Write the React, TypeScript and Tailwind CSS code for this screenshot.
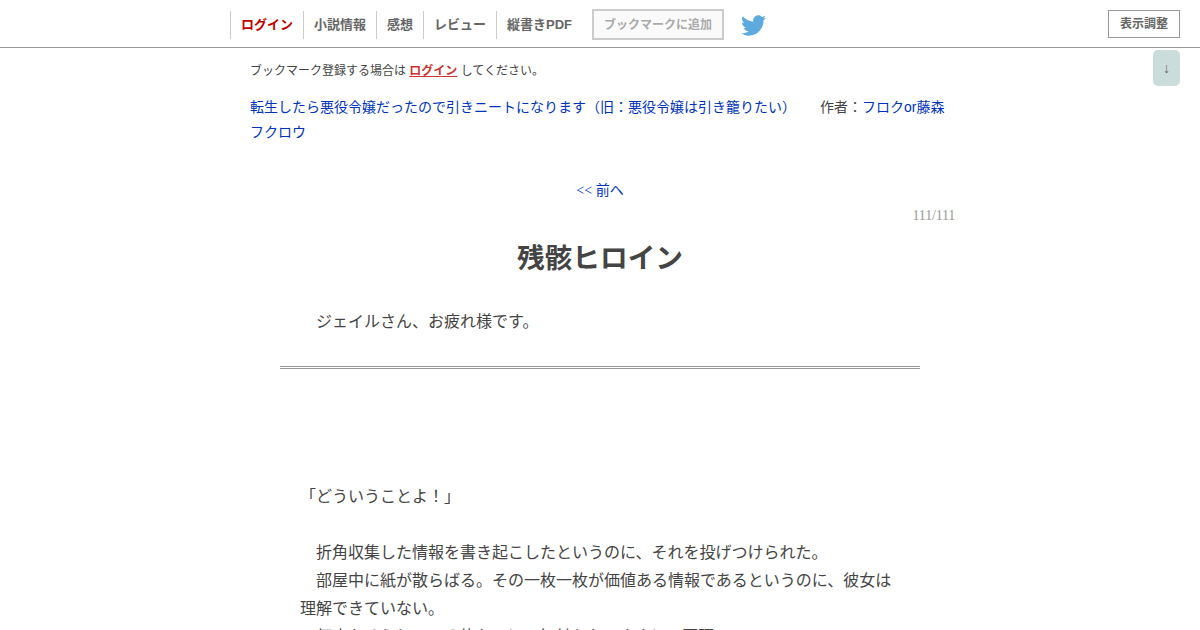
import { FaTwitter } from 'react-icons/fa';

const NAV_ITEMS = [
  { label: 'ログイン', className: 'text-[#c00000]' },
  { label: '小説情報', className: 'text-[#666]' },
  { label: '感想', className: 'text-[#666]' },
  { label: 'レビュー', className: 'text-[#666]' },
  { label: '縦書きPDF', className: 'text-[#666]' },
];

const BODY_LINES = [
  '「どういうことよ！」',
  '',
  '　折角収集した情報を書き起こしたというのに、それを投げつけられた。',
  '　部屋中に紙が散らばる。その一枚一枚が価値ある情報であるというのに、彼女は理解できていない。',
  '　何度もそうしている体なのに、気付かないままに、再理。',
];

const Header = () => (
  <header className="flex h-12 justify-between border-b border-[#999] pr-5 pl-[230px]">
    <nav className="flex items-start">
      <ul className="flex pt-[11px] text-[13px] leading-7 font-bold">
        {NAV_ITEMS.map(({ label, className }) => (
          <li key={label} className="h-7 border-l border-[#ccc] px-2.5">
            <a href="#" className={className}>
              {label}
            </a>
          </li>
        ))}
      </ul>
      <span className="mt-[9px] ml-2.5 h-[31px] border-2 border-[#ccc] bg-[#fafafa] px-2.5 text-xs leading-7 font-bold text-[#aaa]">
        ブックマークに追加
      </span>
      <a href="#" aria-label="Twitter" className="mt-[13px] ml-[17px]">
        <FaTwitter className="h-[25px] w-[25px] text-[#5ea9dd]" />
      </a>
    </nav>
    <button
      type="button"
      className="mt-2.5 h-7 w-[72px] border border-[#999] text-xs leading-6 font-bold text-[#666]"
    >
      表示調整
    </button>
  </header>
);

const App = () => (
  <div className="relative h-[630px] overflow-hidden bg-white font-['Liberation_Serif','Noto_Sans_CJK_JP',serif] text-[#444]">
    <div className="font-['Liberation_Sans','Noto_Sans_CJK_JP',sans-serif]">
      <Header />
    </div>
    <a
      href="#"
      className="absolute top-[50px] right-5 flex h-9 w-[27px] items-center justify-center rounded-[5px] bg-[#cadddb] pt-0.5 text-sm text-[#666]"
    >
      ↓
    </a>

    <main className="mx-auto w-[740px]">
      <div className="px-5 font-['Liberation_Sans','Noto_Sans_CJK_JP',sans-serif]">
        <p className="pt-3.5 text-xs leading-[18px]">
          ブックマーク登録する場合は{' '}
          <a href="#" className="font-bold text-[#c33] underline">
            ログイン
          </a>{' '}
          してください。
        </p>
        <p className="mt-[15px] text-sm leading-[25px]">
          <a href="#" className="text-[#0033bb]">
            転生したら悪役令嬢だったので引きニートになります（旧：悪役令嬢は引き籠りたい）
          </a>
          <span className="pl-6">作者：</span>
          <a href="#" className="text-[#0033bb]">
            フロクor藤森フクロウ
          </a>
        </p>
      </div>

      <div className="mt-[33px] text-center text-sm leading-[25px]">
        <a href="#" className="text-[#0033bb]">
          &lt;&lt; 前へ
        </a>
      </div>
      <div className="pr-[15px] text-right text-sm leading-[25px] tracking-[-0.2px] text-[#999]">
        111/111
      </div>
      <h1 className="mt-1.5 text-center text-[27.7px] leading-[50px] font-bold">残骸ヒロイン</h1>

      <div className="mx-[50px] border-b-[3px] border-double border-[#999] px-5 pt-6 pb-[30px] text-base leading-7">
        <p>{'　ジェイルさん、お疲れ様です。'}</p>
      </div>
      <div className="mx-[70px] pt-[114px] text-base leading-7">
        {BODY_LINES.map((line, index) => (
          <p key={index} className="min-h-7">
            {line}
          </p>
        ))}
      </div>
    </main>
  </div>
);

export default App;
